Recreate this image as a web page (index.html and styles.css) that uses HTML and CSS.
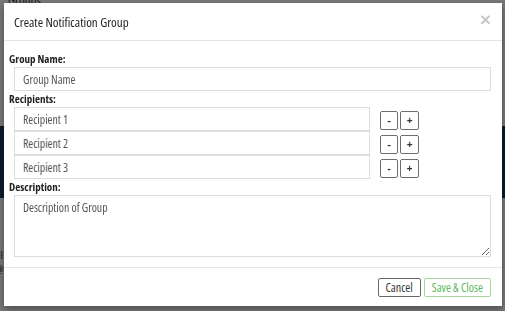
FILE: index.html
```html
<!DOCTYPE html>
<html>
  <head>
    <title>Create Notification Group</title>
    <link rel="stylesheet" href="styles.css">
  </head>
  <body>
    <div class="page">
      <div class="page-title">Groups</div>
      <div class="page-band"></div>
      <div class="page-text">el<br>@</div>
    </div>
    <div class="backdrop"></div>

    <div class="modal">
      <div class="modal-header">
        <h4 class="modal-title">Create Notification Group</h4>
        <span class="close">&times;</span>
      </div>
      <div class="modal-body">
        <label class="field-label">Group Name:</label>
        <input class="field" type="text" value="Group Name" spellcheck="false">

        <label class="field-label">Recipients:</label>
        <div class="recipient-row">
          <input class="field recipient" type="text" value="Recipient 1" spellcheck="false">
          <button class="small-btn">-</button>
          <button class="small-btn wide">+</button>
        </div>
        <div class="recipient-row">
          <input class="field recipient" type="text" value="Recipient 2" spellcheck="false">
          <button class="small-btn">-</button>
          <button class="small-btn wide">+</button>
        </div>
        <div class="recipient-row">
          <input class="field recipient" type="text" value="Recipient 3" spellcheck="false">
          <button class="small-btn">-</button>
          <button class="small-btn wide">+</button>
        </div>

        <label class="field-label">Description:</label>
        <textarea class="field description" spellcheck="false">Description of Group</textarea>
      </div>
      <div class="modal-footer">
        <button class="btn">Cancel</button>
        <button class="btn btn-save">Save &amp; Close</button>
      </div>
    </div>
  </body>
</html>
```

FILE: styles.css
```css
body {
  margin: 0;
  background-color: #ffffff;
  font-family: "Open Sans", "Liberation Sans", sans-serif;
  font-stretch: condensed;
  color: #333;
}
.page {
  height: 311px;
  overflow: hidden;
}
.page-title {
  font-size: 13px;
  margin-top: -9px;
  padding-left: 8px;
}
.page-band {
  margin-top: 117px;
  height: 72px;
  background-color: #1d3a5c;
}
.page-text {
  margin-top: 50px;
  font-size: 11px;
  line-height: 14px;
  margin-left: -4px;
}
.backdrop {
  position: fixed;
  top: 0;
  left: 0;
  right: 0;
  bottom: 0;
  background-color: rgba(0, 0, 0, 0.52);
}

.modal {
  position: absolute;
  top: 3px;
  left: 4px;
  width: 498px;
  height: 303px;
  background-color: white;
  box-shadow: 0 3px 8px rgba(0, 0, 0, 0.4);
  display: flex;
  flex-direction: column;
}
.modal-header {
  height: 37px;
  border-bottom: 1px solid #e5e5e5;
  display: flex;
  align-items: center;
  justify-content: space-between;
  padding: 0 11px 0 10px;
}
.modal-title {
  margin: 0;
  font-size: 13px;
  font-weight: normal;
  color: #222;
}
.close {
  font-family: "Liberation Sans", sans-serif;
  font-size: 19px;
  font-weight: bold;
  color: #c8c8c8;
  margin-top: -4px;
}
.modal-body {
  padding: 10px 11px 10px 5px;
  border-bottom: 1px solid #e5e5e5;
}
.field-label {
  display: block;
  font-size: 11px;
  font-weight: bold;
  line-height: 16px;
  color: #222;
}
.field {
  display: block;
  box-sizing: border-box;
  width: 477px;
  height: 24px;
  margin-left: 5px;
  border: 1px solid #dcdcdc;
  padding: 0 8px;
  font-family: "Open Sans", "Liberation Sans", sans-serif;
  font-stretch: condensed;
  font-size: 11.8px;
  color: #555;
  outline: none;
}
.recipient-row {
  display: flex;
  align-items: center;
  height: 24px;
}
.field.recipient {
  width: 356px;
  margin-right: 10px;
}
.small-btn {
  box-sizing: border-box;
  width: 18px;
  height: 19px;
  margin: 2px 2px 0 0;
  padding: 0;
  border: 1px solid #6e6e6e;
  border-radius: 2px;
  background-color: white;
  font-family: "Open Sans", "Liberation Sans", sans-serif;
  font-size: 10px;
  font-weight: bold;
  color: #333;
}
.small-btn.wide {
  width: 19px;
}
.description {
  height: 62px;
  padding: 3px 8px;
  resize: vertical;
}
.modal-footer {
  flex: 1;
  display: flex;
  align-items: center;
  justify-content: flex-end;
  padding: 0 11px 0 0;
}
.btn {
  box-sizing: border-box;
  height: 19px;
  margin-left: 3px;
  padding: 0 7px;
  border: 1px solid #666;
  border-radius: 2px;
  background-color: white;
  font-family: "Open Sans", "Liberation Sans", sans-serif;
  font-stretch: condensed;
  font-size: 12px;
  color: #333;
}
.btn-save {
  border-color: #a9d4a2;
  color: #5cb85c;
}
```
